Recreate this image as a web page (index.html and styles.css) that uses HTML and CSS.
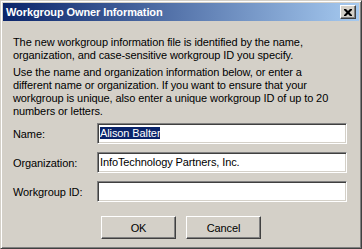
FILE: index.html
```html
<!DOCTYPE html>
<html lang="en">
<head>
    <meta charset="UTF-8">
    <title>Workgroup Owner Information</title>
    <link rel="stylesheet" href="styles.css">
</head>
<body>

    <!-- Dialog window -->
    <div class="window">
        <div class="titlebar">
            <span class="title">Workgroup Owner Information</span>
            <span class="close-btn">
                <svg width="8" height="7" viewBox="0 0 8 7">
                    <path d="M0 0h2l2 2 2-2h2v1l-2.5 2.5L8 6v1H6L4 5 2 7H0V6l2.5-2.5L0 1z" fill="#000"/>
                </svg>
            </span>
        </div>

        <div class="content">
            <p class="intro">The new workgroup information file is identified by the name,<br>organization, and case-sensitive workgroup ID you specify.</p>
            <p class="intro">Use the name and organization information below, or enter a<br>different name or organization. If you want to ensure that your<br>workgroup is unique, also enter a unique workgroup ID of up to 20<br>numbers or letters.</p>

            <div class="fields">
                <div class="field">
                    <label>Name:</label>
                    <div class="textbox"><span class="selected">Alison Balter</span></div>
                </div>
                <div class="field">
                    <label>Organization:</label>
                    <div class="textbox">InfoTechnology Partners, Inc.</div>
                </div>
                <div class="field">
                    <label>Workgroup ID:</label>
                    <div class="textbox"></div>
                </div>
            </div>

            <div class="buttons">
                <button class="win-button">OK</button>
                <button class="win-button">Cancel</button>
            </div>
        </div>
    </div>

</body>
</html>
```

FILE: styles.css
```css
/* General styles */
* {
    box-sizing: border-box;
    margin: 0;
    padding: 0;
}

body {
    font-family: "Liberation Sans", Arial, sans-serif;
    font-size: 11px;
    letter-spacing: -0.1px;
    background: #d4d0c8;
    color: #000;
    width: 362px;
    height: 249px;
    overflow: hidden;
}

/* Window frame */
.window {
    width: 362px;
    height: 249px;
    background: #d4d0c8;
    border: 1px solid;
    border-color: #d4d0c8 #404040 #404040 #d4d0c8;
    box-shadow: inset 1px 1px 0 #fff, inset -1px -1px 0 #808080;
    padding: 2px;
    display: flex;
    flex-direction: column;
}

.titlebar {
    height: 18px;
    background: linear-gradient(to right, #0a246a, #a6caf0);
    display: flex;
    align-items: center;
    justify-content: space-between;
    padding: 0 3px 0 3px;
}

.title {
    color: #fff;
    font-weight: bold;
    font-size: 11px;
}

.close-btn {
    width: 16px;
    height: 14px;
    background: #d4d0c8;
    border: 1px solid;
    border-color: #fff #404040 #404040 #fff;
    box-shadow: inset -1px -1px 0 #808080;
    display: flex;
    justify-content: center;
    align-items: center;
}

/* Dialog content */
.content {
    padding: 15px 10px 0 10px;
}

.intro {
    line-height: 13px;
    margin-bottom: 4px;
    white-space: nowrap;
}

.fields {
    margin-top: 5px;
    display: flex;
    flex-direction: column;
    gap: 8px;
}

.field {
    display: flex;
    align-items: center;
}

.field label {
    width: 84px;
}

.textbox {
    width: 250px;
    height: 21px;
    background: #fff;
    border: 1px solid;
    border-color: #808080 #fff #fff #808080;
    box-shadow: inset 1px 1px 0 #404040, inset -1px -1px 0 #d4d0c8;
    padding: 3px 2px;
    line-height: 13px;
    white-space: nowrap;
}

.selected {
    background: #0a246a;
    color: #fff;
}

.buttons {
    margin-top: 14px;
    display: flex;
    justify-content: center;
    gap: 10px;
}

.win-button {
    width: 75px;
    height: 23px;
    font-family: inherit;
    font-size: 11px;
    letter-spacing: inherit;
    background: #d4d0c8;
    color: #000;
    border: 1px solid;
    border-color: #fff #404040 #404040 #fff;
    box-shadow: inset -1px -1px 0 #808080;
}
```
